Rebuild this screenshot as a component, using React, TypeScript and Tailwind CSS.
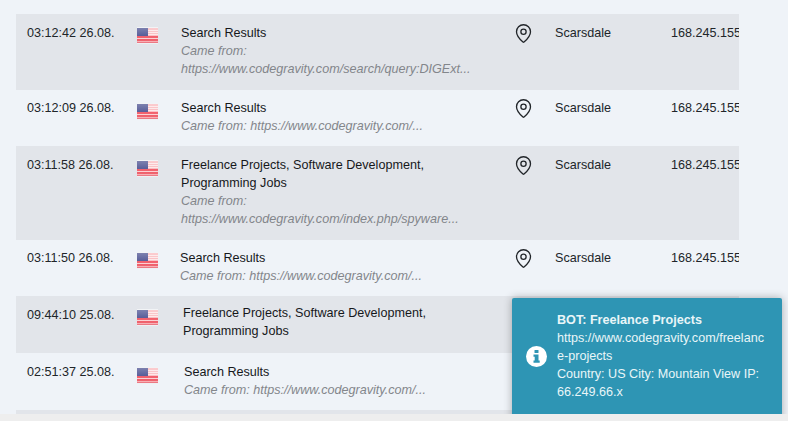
import { MapPin } from 'lucide-react'

type Row = {
  time: string
  title: string[]
  from: string[]
  textPad: string
  timeTop: string
  flagTop: string
  textTop: string
  city?: boolean
  height: string
}

const rows: Row[] = [
  {
    time: '03:12:42 26.08.',
    title: ['Search Results'],
    from: ['Came from:', 'https://www.codegravity.com/search/query:DIGExt...'],
    textPad: 'pl-[23px]',
    timeTop: 'pt-[10px]',
    flagTop: 'pt-[13px]',
    textTop: 'pt-[10px]',
    city: true,
    height: 'h-[76px]',
  },
  {
    time: '03:12:09 26.08.',
    title: ['Search Results'],
    from: ['Came from: https://www.codegravity.com/...'],
    textPad: 'pl-[23px]',
    timeTop: 'pt-[9px]',
    flagTop: 'pt-[13px]',
    textTop: 'pt-[9px]',
    city: true,
    height: 'h-[56px]',
  },
  {
    time: '03:11:58 26.08.',
    title: ['Freelance Projects, Software Development,', 'Programming Jobs'],
    from: ['Came from:', 'https://www.codegravity.com/index.php/spyware...'],
    textPad: 'pl-[23px]',
    timeTop: 'pt-[10px]',
    flagTop: 'pt-[14px]',
    textTop: 'pt-[10px]',
    city: true,
    height: 'h-[94px]',
  },
  {
    time: '03:11:50 26.08.',
    title: ['Search Results'],
    from: ['Came from: https://www.codegravity.com/...'],
    textPad: 'pl-[22px]',
    timeTop: 'pt-[9px]',
    flagTop: 'pt-[12px]',
    textTop: 'pt-[9px]',
    city: true,
    height: 'h-[56px]',
  },
  {
    time: '09:44:10 25.08.',
    title: ['Freelance Projects, Software Development,', 'Programming Jobs'],
    from: [],
    textPad: 'pl-[25px]',
    timeTop: 'pt-[10px]',
    flagTop: 'pt-[13px]',
    textTop: 'pt-2',
    height: 'h-[57px]',
  },
  {
    time: '02:51:37 25.08.',
    title: ['Search Results'],
    from: ['Came from: https://www.codegravity.com/...'],
    textPad: 'pl-[26px]',
    timeTop: 'pt-[10px]',
    flagTop: 'pt-[14px]',
    textTop: 'pt-[10px]',
    height: 'h-[57px]',
  },
]

function UsFlag() {
  return (
    <svg width="21" height="17" viewBox="0 0 21 17" className="shrink-0">
      <defs>
        <linearGradient id="gloss" x1="0" y1="0" x2="0" y2="1">
          <stop offset="0" stopColor="#ffffff" stopOpacity="0.35" />
          <stop offset="0.5" stopColor="#ffffff" stopOpacity="0.15" />
          <stop offset="0.55" stopColor="#ffffff" stopOpacity="0" />
          <stop offset="1" stopColor="#ffffff" stopOpacity="0.12" />
        </linearGradient>
      </defs>
      <rect width="21" height="17" fill="#eceef2" />
      <rect y="1" width="21" height="15" fill="#f9b4b9" />
      <rect y="3" width="21" height="1" fill="#fde4e5" />
      <rect y="5" width="21" height="1" fill="#fde4e5" />
      <rect y="7" width="21" height="1" fill="#fde4e5" />
      <rect y="9" width="21" height="2" fill="#f2606c" />
      <rect y="11" width="21" height="1" fill="#fbd0d3" />
      <rect y="12" width="21" height="2" fill="#ee5864" />
      <rect y="14" width="21" height="1" fill="#f7a8ae" />
      <rect y="15" width="21" height="1" fill="#ea6a76" />
      <rect y="1" width="11" height="8" fill="#3e4489" />
      <rect width="21" height="17" fill="url(#gloss)" />
    </svg>
  )
}

function InfoBadge() {
  return (
    <svg width="21" height="21" viewBox="0 0 21 21" className="shrink-0">
      <circle cx="10.5" cy="10.5" r="10.5" fill="#ffffff" />
      <rect x="8.5" y="4" width="4" height="3" rx="0.5" fill="#2e95b4" />
      <path d="M7.5 8.5h5v6h1.2v2.2H7.5v-2.2h1.2v-3.8H7.5z" fill="#2e95b4" />
    </svg>
  )
}

export default function App() {
  return (
    <div className="relative flex h-[421px] w-[788px] flex-col overflow-hidden bg-[#eff3f8] font-['Liberation_Sans',Arial,sans-serif] text-[12.6px] leading-[18px] text-[#212529]">
      <div className="flex-1 overflow-hidden pt-[14px] pl-4">
        <div className="w-[723px]">
          {rows.map((row, i) => (
            <div
              key={row.time}
              className={`flex overflow-hidden ${row.height} ${i % 2 === 0 ? 'bg-[#e2e5ea]' : ''}`}
            >
              <div className={`w-[121px] shrink-0 pl-[11px] whitespace-nowrap ${row.timeTop}`}>{row.time}</div>
              <div className={row.flagTop}>
                <UsFlag />
              </div>
              <div className={`w-[355px] shrink-0 ${row.textPad} ${row.textTop}`}>
                {row.title.map((line) => (
                  <div key={line} className="whitespace-nowrap text-[#16181b]">
                    {line}
                  </div>
                ))}
                {row.from.map((line) => (
                  <div key={line} className="whitespace-nowrap text-[#83868b] italic">
                    {line}
                  </div>
                ))}
              </div>
              {row.city && (
                <div className={`flex min-w-0 flex-1 items-start ${row.textTop}`}>
                  <MapPin size={21} strokeWidth={1.5} className="mt-[-1px] shrink-0 text-[#212529]" />
                  <span className="ml-[21px] w-[116px] shrink-0">Scarsdale</span>
                  <span className="whitespace-nowrap">168.245.155.x</span>
                </div>
              )}
            </div>
          ))}
          <div className="h-4 bg-[#e2e5ea]" />
        </div>
      </div>

      <div className="absolute top-[298px] left-[512px] flex h-[130px] w-[270px] items-start gap-[10px] rounded-[2px] bg-[#2e95b4] pt-[13px] pr-4 pl-[14px] text-[#e9f5f8] shadow-[0_0_8px_rgba(0,0,0,0.3)]">
        <div className="mt-[35px]">
          <InfoBadge />
        </div>
        <div className="min-w-0 flex-1 break-words">
          <div className="font-bold">BOT: Freelance Projects</div>
          <div>https://www.codegravity.com/freelance-projects</div>
          <div>Country: US City: Mountain View IP: 66.249.66.x</div>
        </div>
      </div>

      <div className="relative z-10 h-[7px] shrink-0 bg-[#eeeeee]" />
    </div>
  )
}
